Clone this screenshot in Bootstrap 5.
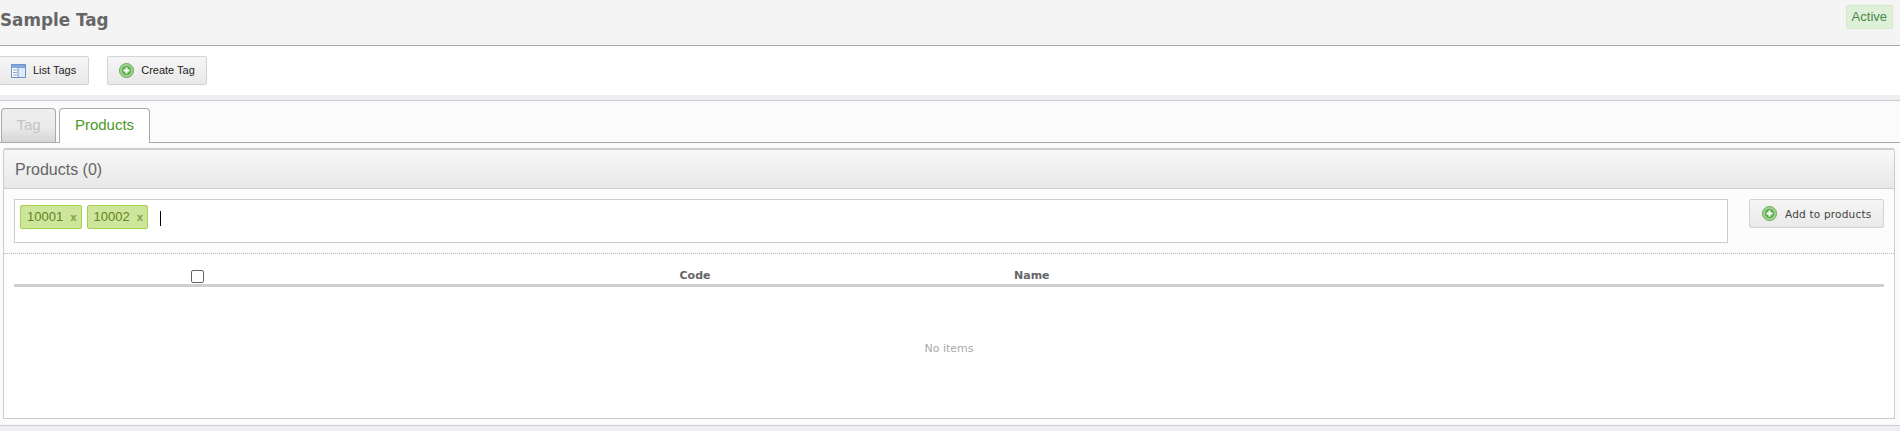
<!DOCTYPE html>
<html lang="en">
<head>
<meta charset="utf-8">
<title>Sample Tag</title>
<link rel="stylesheet" href="https://cdn.jsdelivr.net/npm/bootstrap@5.3.0/dist/css/bootstrap.min.css">
<style>
html,body{height:431px;overflow:hidden}
body{background:#eeeff2;font-family:"Liberation Sans",Arial,sans-serif;color:#555}
.page-head{height:46px;background:#f4f4f4;border-bottom:1px solid #aaa}
.page-title{font:bold 16.800px/41px "DejaVu Sans",sans-serif;color:#666;margin:0}
.state-pill{margin:5px 7px 0 0;height:24px;padding:0 5px;background:#dff0d8;border:1px solid #d6e9c6;border-radius:2px;font-size:13px;line-height:22px;color:#468847}
.action-bar{height:49px;background:#fff;padding-top:10px;gap:18px}
.tool-btn{height:29px;background:linear-gradient(#f6f6f6,#e9e9e9);border:1px solid #d3d3d3;border-radius:2px;font-size:11px;color:#222;gap:7px;padding:0 11px}
.tool-first{margin-left:-1px;padding-right:12px}
.tab-zone{margin-top:5px;height:326px;background:#fbfbfb;border-top:1px solid #ccc}
.tab-row{height:42px;padding:7px 0 0 1px;gap:3px;border-bottom:1px solid #aaa}
.tab-item{height:34px;border:1px solid #aaa;border-bottom:0;border-radius:4px 4px 0 0;font-size:15px;line-height:32px;text-align:center}
.tab-off{width:55px;background:linear-gradient(#eee 0,#ebebeb 55%,#d5d5d5 100%);color:#c4c4c4}
.tab-on{width:91px;height:35px;background:#fff;color:#4a9a1e}
.prod-panel{margin:5px 5px 0 3px;height:271px;background:#fff;border:1px solid #ccc;border-top-width:2px;border-radius:3px 3px 0 0}
.prod-head{height:39px;padding-left:11px;background:linear-gradient(#f8f8f8,#e8e8e8);border-bottom:1px solid #ccc;font-size:16px;line-height:40px;color:#666}
.add-row{height:65px;background:#fcfcfc;border-bottom:1px dotted #bbb;padding:10px 10px 0}
.tag-field{flex:1;height:44px;background:#fff;border:1px solid #ccc;padding:5px 5px;gap:5px}
.tag-chip{height:24px;padding:0 4px 0 6px;background:#cde69c;border:1px solid #a5d24a;border-radius:2px;color:#638421;font-size:13px;line-height:22px;gap:7px}
.tag-x{font:bold 10px/24px "DejaVu Sans",sans-serif;color:#88a84a}
.caret-bar{width:1px;height:15px;background:#000;margin:6px 0 0 7px}
.add-btn{width:135px;height:29px;margin-left:21px;background:linear-gradient(#f6f6f6,#e9e9e9);border:1px solid #d3d3d3;border-radius:2px;font:10.500px "DejaVu Sans",sans-serif;letter-spacing:.2px;color:#444;gap:8px;padding:0 0 0 12px;white-space:nowrap}
.grid-head{display:grid;grid-template-columns:366px 630px 1fr;margin:0 10px;height:33px;border-bottom:3px solid #d0d0d0;font:bold 11px/43px "DejaVu Sans",sans-serif;color:#666}
.grid-box{justify-self:center;width:13px;height:13px;margin:16px 0 0;border:1px solid #666;border-radius:2px;background:#fff;appearance:none;display:block}
.code-col{text-align:center}
.name-col{padding-left:4px}
.empty-note{height:123px;padding-top:54px;text-align:center;font:11px/16px "DejaVu Sans",sans-serif;color:#aaa}
.bottom-line{margin-top:6px;border-top:1px solid #ccc;height:5px;background:#eeeff2}
</style>
</head>
<body>
<header class="page-head d-flex justify-content-between align-items-start">
  <h1 class="page-title">Sample Tag</h1>
  <span class="state-pill">Active</span>
</header>
<div class="action-bar d-flex align-items-start">
  <button type="button" class="tool-btn tool-first btn d-inline-flex align-items-center">
    <svg width="15" height="14" viewBox="0 0 15 14" aria-hidden="true"><rect x=".5" y=".5" width="14" height="13" fill="#fff" stroke="#6f94c8"/><rect x="1" y="1" width="13" height="3" fill="#86a9db"/><rect x="7" y="4" width="7" height="9" fill="#dfe9f7"/><path d="M7 4v9" stroke="#6f94c8"/><path d="M2 6h4M2 8.500h4M2 11h4" stroke="#8aa6cf"/></svg>
    List Tags
  </button>
  <button type="button" class="tool-btn btn d-inline-flex align-items-center">
    <svg width="15" height="15" viewBox="0 0 15 15" aria-hidden="true"><circle cx="7.500" cy="7.500" r="7" fill="#a5d596" stroke="#6aa658"/><circle cx="7.500" cy="7.500" r="4.800" fill="#5fae4f"/><path d="M7.500 4.500v6M4.500 7.500h6" stroke="#fff" stroke-width="2"/></svg>
    Create Tag
  </button>
</div>
<main class="tab-zone">
  <div class="tab-row d-flex align-items-start">
    <div class="tab-item tab-off">Tag</div>
    <div class="tab-item tab-on">Products</div>
  </div>
  <section class="prod-panel">
    <div class="prod-head">Products (0)</div>
    <div class="add-row d-flex align-items-start">
      <div class="tag-field d-flex align-items-start">
        <span class="tag-chip d-inline-flex">10001 <span class="tag-x">x</span></span>
        <span class="tag-chip d-inline-flex">10002 <span class="tag-x">x</span></span>
        <span class="caret-bar"></span>
      </div>
      <button type="button" class="add-btn btn d-inline-flex align-items-center">
        <svg width="15" height="15" viewBox="0 0 15 15" aria-hidden="true"><circle cx="7.500" cy="7.500" r="7" fill="#a5d596" stroke="#6aa658"/><circle cx="7.500" cy="7.500" r="4.800" fill="#5fae4f"/><path d="M7.500 4.500v6M4.500 7.500h6" stroke="#fff" stroke-width="2"/></svg>
        Add to products
      </button>
    </div>
    <div class="grid-head">
      <input class="grid-box" type="checkbox" aria-label="Select all">
      <div class="code-col">Code</div>
      <div class="name-col">Name</div>
    </div>
    <div class="empty-note">No items</div>
  </section>
  <div class="bottom-line"></div>
</main>
<script src="https://cdn.jsdelivr.net/npm/bootstrap@5.3.0/dist/js/bootstrap.bundle.min.js"></script>
</body>
</html>
